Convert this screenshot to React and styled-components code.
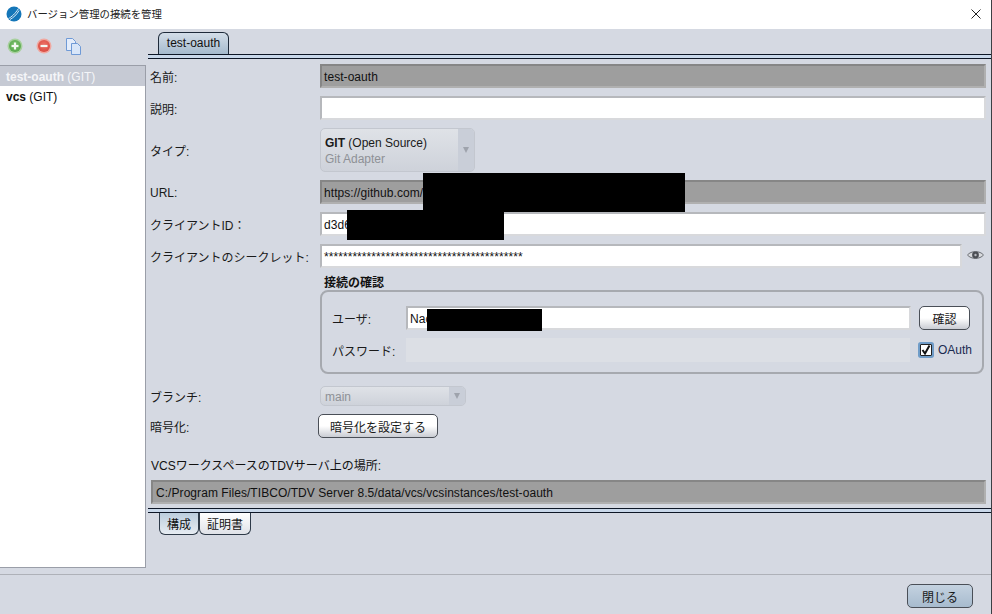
import React from "react"
import styled, { createGlobalStyle } from "styled-components"

const Global = createGlobalStyle`
  html, body { margin: 0; padding: 0; background: #d5d9e2; }
  body { font-family: "Liberation Sans", "Noto Sans CJK JP", sans-serif; font-size: 12px; color: #111; }
  * { box-sizing: border-box; }
`

const Win = styled.div`
  width: 992px;
  height: 614px;
  display: flex;
  flex-direction: column;
  background: #d5d9e2;
  border-right: 1px solid #3c3f44;
  overflow: hidden;
`
const TitleBar = styled.div`
  height: 29px;
  flex: none;
  background: #fff;
  display: flex;
  align-items: center;
  padding: 0 10px 2px 6px;
  gap: 5px;
`
const TitleText = styled.div`
  flex: 1;
  font-size: 10.4px;
  color: #222;
`
const Body = styled.div`
  flex: 1;
  display: flex;
  min-height: 0;
`
const Side = styled.div`
  width: 146px;
  flex: none;
  display: flex;
  flex-direction: column;
`
const Tools = styled.div`
  height: 36px;
  flex: none;
  display: flex;
  align-items: center;
  gap: 13px;
  padding: 0 0 2px 7px;
`
const List = styled.div`
  height: 503px;
  flex: none;
  background: #fff;
  border: 1px solid #9a9ea8;
  border-left: 0;
`
const Item = styled.div`
  height: 20px;
  line-height: 22px;
  padding-left: 6px;
  background: ${p => (p.$on ? "#c6cad4" : "#fff")};
  color: ${p => (p.$on ? "#f4f5f8" : "#111")};
  b { font-weight: 700; }
`
const Main = styled.div`
  flex: 1;
  min-width: 0;
  padding: 3px 0 0 2px;
  display: flex;
  flex-direction: column;
`
const TabRow = styled.div`
  height: 22px;
  flex: none;
  display: flex;
  padding-left: ${p => p.$left}px;
`
const Tab = styled.div`
  width: ${p => p.$w}px;
  height: 100%;
  display: flex;
  align-items: center;
  justify-content: center;
  padding-bottom: 1px;
  border: 1px solid #1e2a3a;
  border-bottom: 0;
  border-radius: 6px 6px 0 0;
  color: #111;
  background: linear-gradient(#d3dde8, #a5bacd);
`
const LowTab = styled(Tab)`
  padding-bottom: 0;
  border: 1px solid #2e3a48;
  border-top: 0;
  border-radius: 0 0 6px 6px;
  background: ${p => (p.$on ? "linear-gradient(#bccddd, #e6ecf2)" : "linear-gradient(#ffffff, #dfe2e8)")};
`
const Rule = styled.div`
  height: 5px;
  flex: none;
  background: #c9d8ea;
  border-top: 1px solid #0d1626;
  border-bottom: 1px solid #0d1626;
`
const RuleGap = styled.div`
  height: 4px;
  flex: none;
`
const Form = styled.div`
  padding: 5px 5px 0 2px;
  display: flex;
  flex-direction: column;
`
const Row = styled.div`
  display: flex;
  align-items: center;
  height: ${p => p.$h || 24}px;
  margin-bottom: ${p => p.$mb ?? 8}px;
`
const Label = styled.div`
  width: ${p => p.$w || 170}px;
  flex: none;
  padding-top: ${p => p.$nudge || 0}px;
  color: #1a1a1a;
  white-space: nowrap;
`
const Field = styled.div`
  position: relative;
  height: 24px;
  flex: 1;
  line-height: 22px;
  padding-left: 2px;
  letter-spacing: 0.06px;
  white-space: nowrap;
  border: 2px solid ${p => (p.$kind === "ro" ? "#868686" : p.$kind === "off" ? "#dcdfe5" : "#b6b8bc")};
  border-right-color: ${p => (p.$kind === "ro" ? "#b0b0b0" : p.$kind === "off" ? "#dcdfe5" : "#d8d9dc")};
  border-bottom-color: ${p => (p.$kind === "ro" ? "#b0b0b0" : p.$kind === "off" ? "#dcdfe5" : "#d8d9dc")};
  background: ${p => (p.$kind === "ro" ? "#9e9e9e" : p.$kind === "off" ? "#dcdfe5" : "#fff")};
`
const PathField = styled(Field)`
  flex: none;
  margin-left: 1px;
  padding-left: 3px;
`
const Redact = styled.div`
  position: absolute;
  left: ${p => p.$l}px;
  top: ${p => p.$t}px;
  width: ${p => p.$w}px;
  height: ${p => p.$h}px;
  background: #000;
`
const Combo = styled.div`
  width: ${p => p.$w}px;
  height: ${p => p.$h}px;
  flex: none;
  display: flex;
  border: 1px solid #c3c7cf;
  border-radius: 5px;
  background: linear-gradient(#dfe2e7, #ced2da);
  overflow: hidden;
`
const ComboText = styled.div`
  flex: 1;
  display: flex;
  flex-direction: column;
  justify-content: center;
  gap: 2px;
  padding: 2px 0 0 4px;
  color: #8e9196;
  line-height: 14px;
`
const ComboMain = styled.div`
  color: #1a1a1a;
  b { font-weight: 700; }
`
const ComboArrow = styled.div`
  width: 16px;
  flex: none;
  display: flex;
  align-items: center;
  justify-content: center;
  background: #c9ced8;
  &::after {
    content: "";
    border-left: 3.5px solid transparent;
    border-right: 3.5px solid transparent;
    border-top: 6px solid #9ea3ac;
  }
`
const EyeSlot = styled.div`
  width: 24px;
  flex: none;
  display: flex;
  justify-content: flex-end;
  padding: 0 2px 2px 0;
`
const GroupTitle = styled.div`
  margin-left: 174px;
  font-weight: 700;
  font-size: 12px;
  line-height: 14px;
`
const Group = styled.div`
  margin: 0 2px 12px 170px;
  height: 84px;
  border: 2px solid #a6a9af;
  border-radius: 8px;
  padding: 14px 12px 0 10px;
  display: flex;
  flex-direction: column;
`
const Button = styled.div`
  width: ${p => p.$w}px;
  height: 24px;
  flex: none;
  margin-left: ${p => p.$ml || 0}px;
  display: flex;
  align-items: center;
  justify-content: center;
  color: #1a1a1a;
  border: 1px solid #4a4f57;
  border-radius: 5px;
  background: ${p => (p.$blue ? "linear-gradient(#c4d2e0, #a7bbce)" : "linear-gradient(#ffffff 50%, #c9ccd3)")};
`
const Check = styled.div`
  width: 52px;
  flex: none;
  display: flex;
  align-items: center;
  gap: 6px;
  margin-left: 8px;
  white-space: nowrap;
  color: #1a2a50;
`
const CheckBox = styled.div`
  width: 12px;
  height: 12px;
  flex: none;
  margin-left: 2px;
  background: #fff;
  border: 1px solid #222;
  box-shadow: 0 0 0 2px #6f9cc8;
  border-radius: 1px;
  display: flex;
  align-items: center;
  justify-content: center;
`
const SmallLabel = styled.div`
  margin: 21px 0 7px 1px;
  line-height: 14px;
`
const Footer = styled.div`
  height: 40px;
  flex: none;
  border-top: 1px solid #aeb1b8;
  display: flex;
  justify-content: flex-end;
  padding: 9px 18px 0 0;
`

function RoundIcon({ id, ring, from, to, plus }) {
  return (
    <svg width="16" height="16" viewBox="0 0 16 16">
      <defs>
        <radialGradient id={id} cx="50%" cy="40%" r="60%">
          <stop offset="0" stopColor={from} />
          <stop offset="1" stopColor={to} />
        </radialGradient>
      </defs>
      <circle cx="8" cy="8" r="7.5" fill={ring} />
      <circle cx="8" cy="8" r="6" fill={`url(#${id})`} />
      <rect x="4.5" y="6.9" width="7" height="2.2" fill="#f4f8f2" />
      {plus && <rect x="6.9" y="4.5" width="2.2" height="7" fill="#f4f8f2" />}
    </svg>
  )
}

function CopyIcon() {
  return (
    <svg width="17" height="17" viewBox="0 0 17 17">
      <path d="M1.5 0.5h6l3 3v9h-9z" fill="#e4edfb" stroke="#6f9ad6" />
      <path d="M6.5 5.5h6l3 3v8h-9z" fill="#d8e6f9" stroke="#6f9ad6" />
    </svg>
  )
}

function Logo() {
  return (
    <svg width="16" height="16" viewBox="0 0 16 16">
      <circle cx="8" cy="8" r="7.5" fill="#1476b8" />
      <path d="M2.5 12.5C5.5 11 9 8 12.5 2.5M4 13.5C7.5 11.5 10.5 9 13 4.5" stroke="#dcecf6" strokeWidth="1" fill="none" />
    </svg>
  )
}

function Eye() {
  return (
    <svg width="17" height="10" viewBox="0 0 17 10">
      <path d="M0.5 5C4 0.5 13 0.5 16.5 5C13 9.5 4 9.5 0.5 5z" fill="#d8dade" stroke="#6a6d73" />
      <circle cx="8.5" cy="5" r="3.4" fill="#4d5056" />
      <circle cx="8.5" cy="5" r="1.2" fill="#b8bac0" />
    </svg>
  )
}

export default function App() {
  return (
    <Win>
      <Global />
      <TitleBar>
        <Logo />
        <TitleText>バージョン管理の接続を管理</TitleText>
        <svg width="10" height="10" viewBox="0 0 10 10">
          <path d="M0.5 0.5l9 9M9.5 0.5l-9 9" stroke="#222" strokeWidth="1" fill="none" />
        </svg>
      </TitleBar>
      <Body>
        <Side>
          <Tools>
            <RoundIcon id="addGrad" plus ring="#a8d09e" from="#7fc070" to="#58a84c" />
            <RoundIcon id="delGrad" ring="#f0a8a0" from="#ee7468" to="#d94c42" />
            <CopyIcon />
          </Tools>
          <List>
            <Item $on><b>test-oauth</b> (GIT)</Item>
            <Item><b>vcs</b> (GIT)</Item>
          </List>
        </Side>
        <Main>
          <TabRow $left={10}>
            <Tab $w={71}>test-oauth</Tab>
          </TabRow>
          <Rule />
          <Form>
            <Row>
              <Label>名前:</Label>
              <Field $kind="ro">test-oauth</Field>
            </Row>
            <Row>
              <Label>説明:</Label>
              <Field />
            </Row>
            <Row $h={44}>
              <Label>タイプ:</Label>
              <Combo $w={155} $h={44}>
                <ComboText>
                  <ComboMain><b>GIT</b> (Open Source)</ComboMain>
                  <div>Git Adapter</div>
                </ComboText>
                <ComboArrow />
              </Combo>
            </Row>
            <Row>
              <Label $nudge={1}>URL:</Label>
              <Field $kind="ro">
                https://github.com/
                <Redact $l={101} $t={-9} $w={262} $h={39} />
              </Field>
            </Row>
            <Row>
              <Label>クライアントID：</Label>
              <Field>
                d3d6
                <Redact $l={25} $t={-4} $w={157} $h={30} />
              </Field>
            </Row>
            <Row>
              <Label>クライアントのシークレット:</Label>
              <Field>******************************************</Field>
              <EyeSlot><Eye /></EyeSlot>
            </Row>
            <GroupTitle>接続の確認</GroupTitle>
            <Group>
              <Row>
                <Label $w={74}>ユーザ:</Label>
                <Field>
                  Nao
                  <Redact $l={19} $t={1} $w={115} $h={22} />
                </Field>
                <Button $w={51} $ml={8}>確認</Button>
              </Row>
              <Row>
                <Label $w={74}>パスワード:</Label>
                <Field $kind="off" />
                <Check>
                  <CheckBox>
                    <svg width="10" height="10" viewBox="0 0 10 10">
                      <path d="M1.5 5l2.5 3.5L8.5 0.5" stroke="#111" strokeWidth="2" fill="none" />
                    </svg>
                  </CheckBox>
                  OAuth
                </Check>
              </Row>
            </Group>
            <Row $h={20}>
              <Label>ブランチ:</Label>
              <Combo $w={146} $h={20}>
                <ComboText>main</ComboText>
                <ComboArrow />
              </Combo>
            </Row>
            <Row $mb={0}>
              <Label $w={168}>暗号化:</Label>
              <Button $w={120}>暗号化を設定する</Button>
            </Row>
            <SmallLabel>VCSワークスペースのTDVサーバ上の場所:</SmallLabel>
            <PathField $kind="ro">C:/Program Files/TIBCO/TDV Server 8.5/data/vcs/vcsinstances/test-oauth</PathField>
          </Form>
          <RuleGap />
          <Rule />
          <TabRow $left={11}>
            <LowTab $w={40} $on>構成</LowTab>
            <LowTab $w={52}>証明書</LowTab>
          </TabRow>
        </Main>
      </Body>
      <Footer>
        <Button $w={66} $blue>閉じる</Button>
      </Footer>
    </Win>
  )
}
